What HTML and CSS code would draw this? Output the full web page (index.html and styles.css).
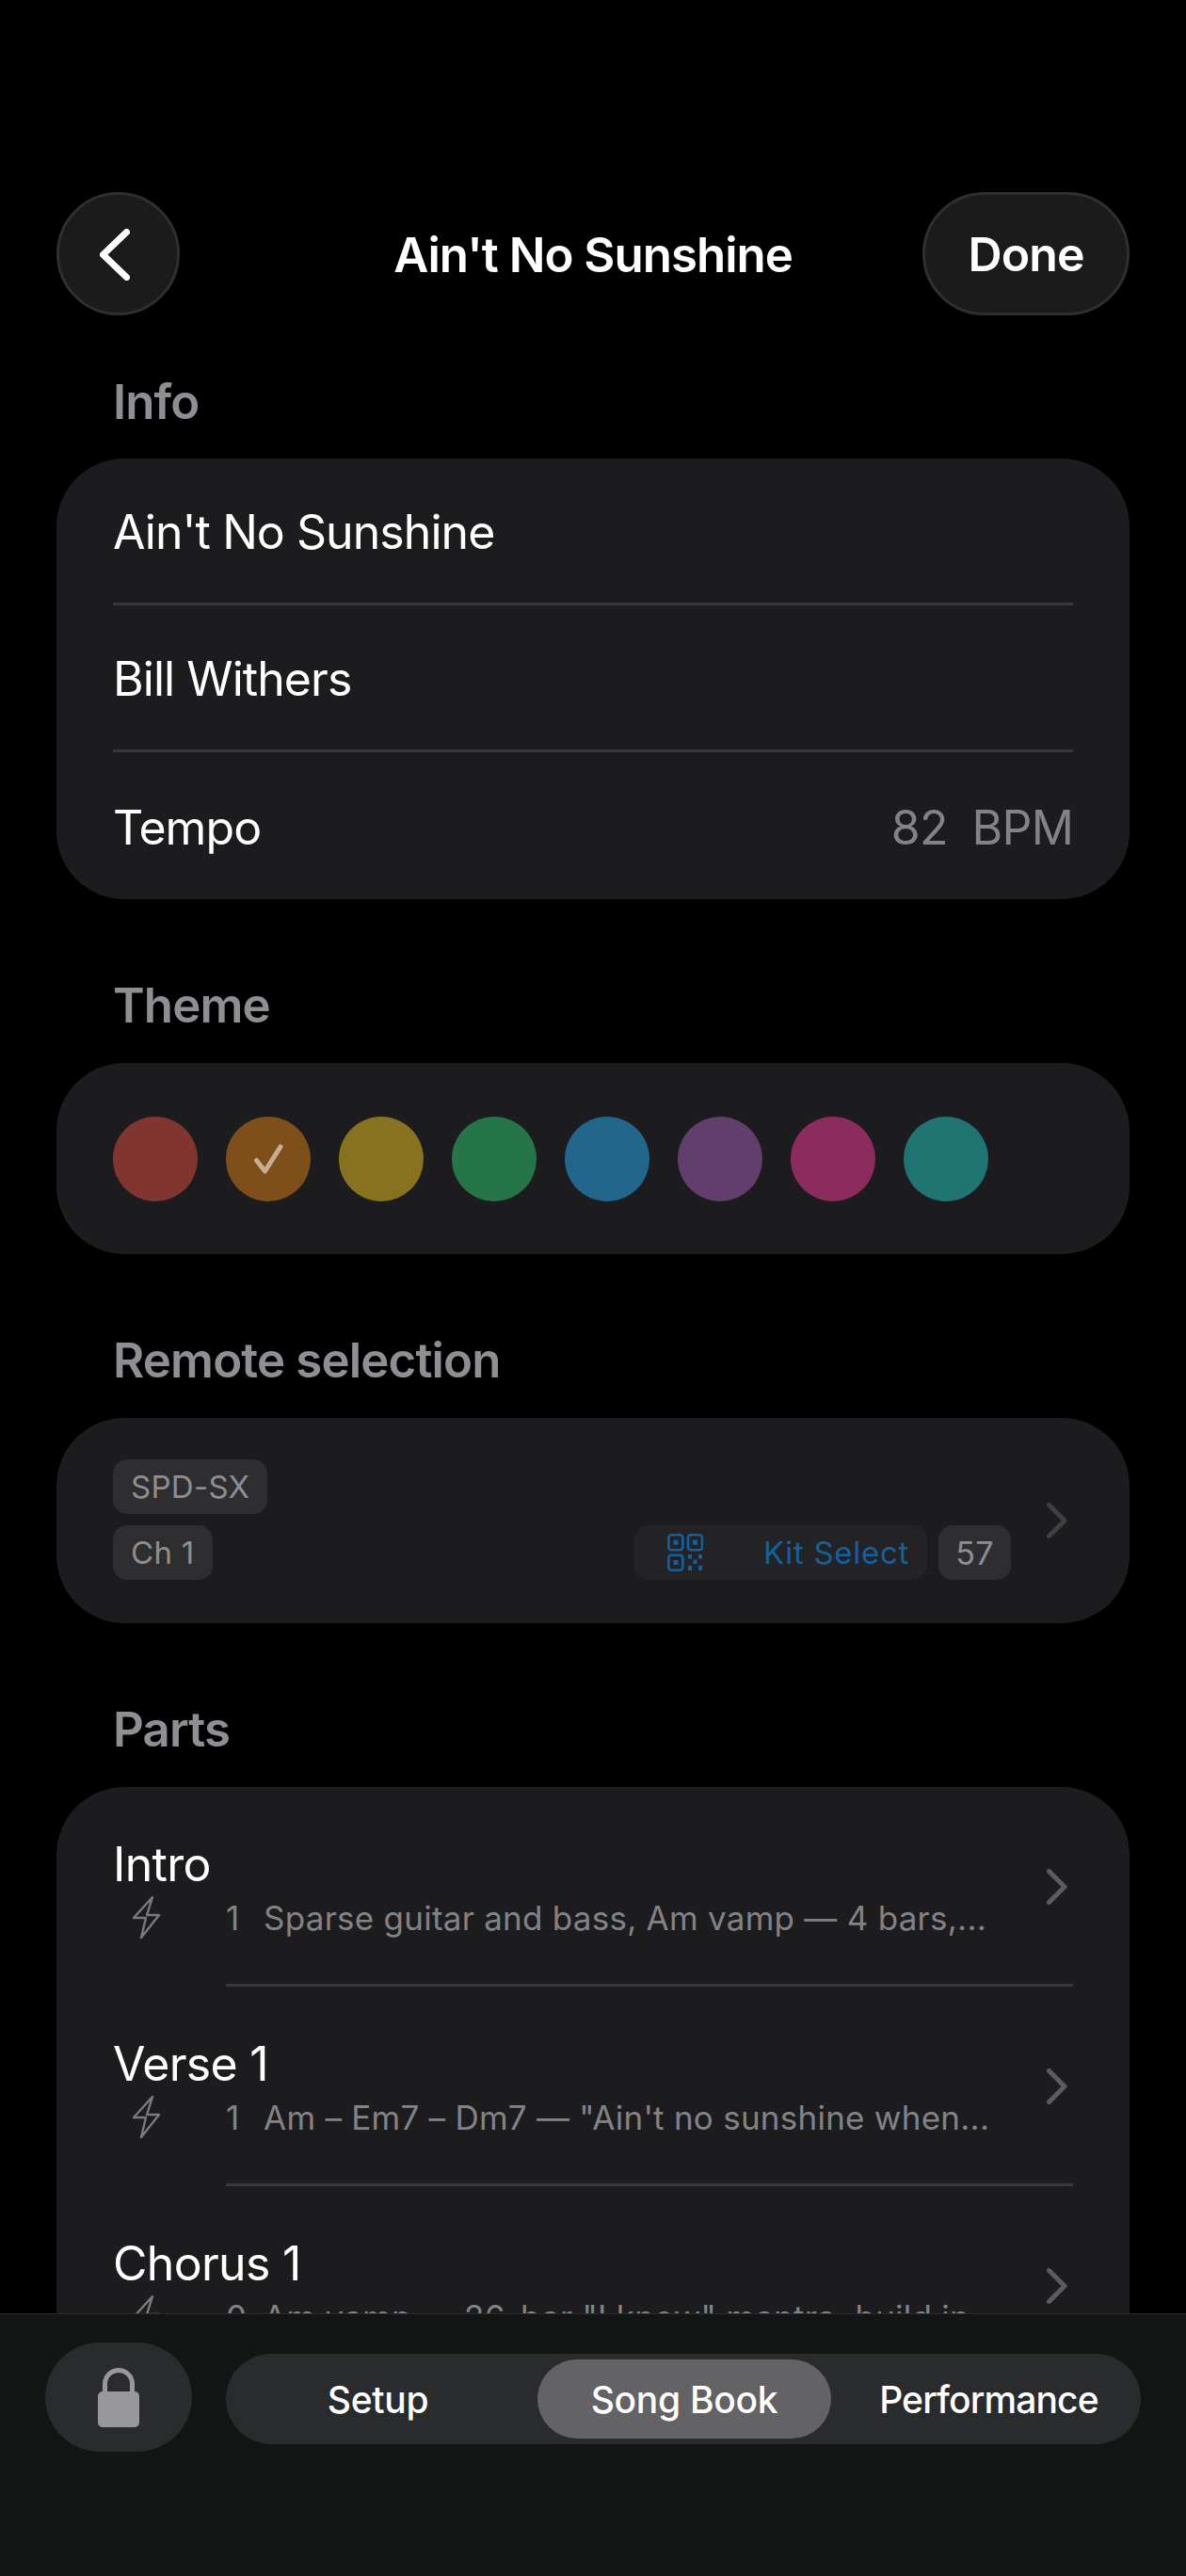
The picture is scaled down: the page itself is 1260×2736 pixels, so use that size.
FILE: index.html
```html
<!DOCTYPE html>
<html lang="en">
<head>
<meta charset="utf-8">
<title>Ain't No Sunshine</title>
<link rel="stylesheet" href="styles.css">
</head>
<body>
<div class="screen">
  <main class="scroll">
    <header class="nav">
      <button class="nav-btn back" aria-label="Back">
        <svg width="32" height="55" viewBox="0 0 32 55"><path d="M28.500 3.500 L3.500 27.500 L28.500 51.500" fill="none" stroke="#fff" stroke-width="7" stroke-linecap="round" stroke-linejoin="round"/></svg>
      </button>
      <h1 class="nav-title">Ain't No Sunshine</h1>
      <button class="nav-btn done">Done</button>
    </header>

    <h2 class="section">Info</h2>
    <section class="card info">
      <div class="info-row">Ain't No Sunshine</div>
      <div class="info-row">Bill Withers</div>
      <div class="info-row"><span>Tempo</span><span class="tempo"><span>82</span><span>BPM</span></span></div>
    </section>

    <h2 class="section">Theme</h2>
    <section class="card swatches">
      <span class="swatch c-red"></span>
      <span class="swatch c-orange">
        <svg width="36" height="36" viewBox="0 0 36 36"><path d="M5.500 19.500 L14.500 31 L31 5" fill="none" stroke="#c6ae95" stroke-width="5" stroke-linecap="round" stroke-linejoin="round"/></svg>
      </span>
      <span class="swatch c-yellow"></span>
      <span class="swatch c-green"></span>
      <span class="swatch c-blue"></span>
      <span class="swatch c-purple"></span>
      <span class="swatch c-pink"></span>
      <span class="swatch c-teal"></span>
    </section>

    <h2 class="section">Remote selection</h2>
    <section class="card remote">
      <div class="remote-body">
        <div class="chip-line"><span class="chip">SPD-SX</span></div>
        <div class="chip-line between">
          <span class="chip">Ch 1</span>
          <span class="kit-group">
            <span class="kit">
              <svg class="qr" width="38" height="40" viewBox="0 0 38 40"><g fill="none" stroke="#14609c" stroke-width="2.6"><rect x="1.3" y="1.3" width="15" height="16" rx="3"/><rect x="22" y="1.3" width="15" height="16" rx="3"/><rect x="1.3" y="22.7" width="15" height="16" rx="3"/></g><g fill="#14609c"><rect x="6.5" y="6.7" width="5" height="5"/><rect x="27" y="6.7" width="5" height="5"/><rect x="6.5" y="28" width="5" height="5"/><rect x="22" y="22" width="4" height="4.5"/><rect x="33" y="22" width="4" height="4.5"/><rect x="27.5" y="27.5" width="4" height="4.5"/><rect x="22" y="34" width="4" height="5"/><rect x="33" y="34" width="4" height="5"/></g></svg>
              <span class="kit-label">Kit Select</span>
            </span>
            <span class="chip num">57</span>
          </span>
        </div>
      </div>
      <svg class="chev dim" width="22" height="38" viewBox="0 0 22 38"><path d="M2.500 2.500 L19 19 L2.500 35.500" fill="none" stroke="#3f3f41" stroke-width="5" stroke-linecap="round" stroke-linejoin="round"/></svg>
    </section>

    <h2 class="section">Parts</h2>
    <section class="card parts">
      <article class="part">
        <div class="part-main">
          <div class="part-title">Intro</div>
          <div class="part-sub">
            <svg class="bolt" width="32" height="48" viewBox="0 0 32 48"><path d="M22 2 L2 24 H15 L10 45 L29 21 H16 Z" fill="none" stroke="#7a7a7c" stroke-width="2.400" stroke-linejoin="round"/></svg>
            <span class="part-num">1</span>
            <span class="part-desc">Sparse guitar and bass, Am vamp — 4 bars,...</span>
          </div>
        </div>
        <svg class="chev" width="22" height="38" viewBox="0 0 22 38"><path d="M2.500 2.500 L19 19 L2.500 35.500" fill="none" stroke="#5c5c5e" stroke-width="5" stroke-linecap="round" stroke-linejoin="round"/></svg>
      </article>
      <article class="part">
        <div class="part-main">
          <div class="part-title">Verse 1</div>
          <div class="part-sub">
            <svg class="bolt" width="32" height="48" viewBox="0 0 32 48"><path d="M22 2 L2 24 H15 L10 45 L29 21 H16 Z" fill="none" stroke="#7a7a7c" stroke-width="2.400" stroke-linejoin="round"/></svg>
            <span class="part-num">1</span>
            <span class="part-desc">Am – Em7 – Dm7 — "Ain't no sunshine when...</span>
          </div>
        </div>
        <svg class="chev" width="22" height="38" viewBox="0 0 22 38"><path d="M2.500 2.500 L19 19 L2.500 35.500" fill="none" stroke="#5c5c5e" stroke-width="5" stroke-linecap="round" stroke-linejoin="round"/></svg>
      </article>
      <article class="part">
        <div class="part-main">
          <div class="part-title">Chorus 1</div>
          <div class="part-sub">
            <svg class="bolt" width="32" height="48" viewBox="0 0 32 48"><path d="M22 2 L2 24 H15 L10 45 L29 21 H16 Z" fill="none" stroke="#7a7a7c" stroke-width="2.400" stroke-linejoin="round"/></svg>
            <span class="part-num">0</span>
            <span class="part-desc">Am vamp — 26-bar "I know" mantra, build in...</span>
          </div>
        </div>
        <svg class="chev" width="22" height="38" viewBox="0 0 22 38"><path d="M2.500 2.500 L19 19 L2.500 35.500" fill="none" stroke="#5c5c5e" stroke-width="5" stroke-linecap="round" stroke-linejoin="round"/></svg>
      </article>
    </section>
  </main>

  <footer class="tabbar">
    <button class="lock" aria-label="Locked">
      <svg width="44" height="63" viewBox="0 0 44 63"><path d="M7.500 30 V17 a14.500 14.500 0 0 1 29 0 V30" fill="none" stroke="#98989b" stroke-width="5"/><rect x="0" y="25" width="44" height="38" rx="5" fill="#98989b"/></svg>
    </button>
    <nav class="tabs">
      <span class="tab">Setup</span>
      <span class="tab active">Song Book</span>
      <span class="tab">Performance</span>
    </nav>
  </footer>
</div>
</body>
</html>
```

FILE: styles.css
```css
* { box-sizing: border-box; margin: 0; padding: 0; }
html, body { background: #000; }
body {
  width: 1260px;
  height: 2736px;
  overflow: hidden;
  font-family: Inter, "Liberation Sans", sans-serif;
  color: #fff;
}
button { font: inherit; color: inherit; border: 0; background: none; }

.screen { height: 2736px; display: flex; flex-direction: column; }
.scroll { flex: 1; min-height: 0; overflow: hidden; padding: 204px 60px 0; }

.nav { display: grid; grid-template-columns: 1fr auto 1fr; align-items: center; height: 131px; }
.nav-btn {
  height: 131px;
  border-radius: 66px;
  background: #1b1b1c;
  border: 3px solid #2f2f30;
  display: flex;
  align-items: center;
  justify-content: center;
}
.back { width: 131px; padding: 2px 7px 0 0; }
.done { width: 220px; font-size: 50px; font-weight: 600; letter-spacing: -0.9px; justify-self: end; }
.nav-title { padding-top: 1px; font-size: 51px; font-weight: 600; letter-spacing: -1px; line-height: 1; }

.section {
  font-size: 51px;
  font-weight: 600;
  line-height: 60px;
  color: #8e8e93;
  letter-spacing: -0.85px;
  padding-left: 60px;
  margin-top: 83px;
  margin-bottom: 31px;
}
.nav + .section { margin-top: 62px; margin-bottom: 30px; }

.card { background: #1c1c1e; border-radius: 72px; }

.info-row {
  height: 156px;
  margin: 0 60px;
  padding-top: 3px;
  display: flex;
  align-items: center;
  justify-content: space-between;
  font-size: 50px;
  letter-spacing: -0.95px;
  border-bottom: 3px solid #38383a;
}
.info-row:last-child { border-bottom: 0; }
.tempo { display: flex; gap: 26px; color: #838386; letter-spacing: -0.8px; }

.swatches { height: 203px; padding: 0 60px; display: flex; align-items: center; gap: 30px; }
.swatch { width: 90px; height: 90px; border-radius: 50%; display: flex; align-items: center; justify-content: center; }
.c-red { background: #803530; }
.c-orange { background: #7f4f19; }
.c-yellow { background: #87721f; }
.c-green { background: #267548; }
.c-blue { background: #22678b; }
.c-purple { background: #613e6b; }
.c-pink { background: #8b2b5e; }
.c-teal { background: #207472; }

.remote { height: 218px; padding: 44px 66px 0 60px; display: flex; align-items: flex-start; }
.remote-body { flex: 1; display: flex; flex-direction: column; gap: 12px; }
.chip-line { display: flex; }
.between { justify-content: space-between; }
.chip {
  height: 58px;
  padding: 0 19px;
  border-radius: 15px;
  background: #2e2e30;
  color: #8e8e91;
  font-size: 33px;
  letter-spacing: 0.3px;
  display: flex;
  align-items: center;
}
.kit-group { display: flex; gap: 12px; margin-right: 38px; }
.kit {
  width: 311px;
  height: 58px;
  padding: 0 19px 0 35px;
  border-radius: 15px;
  background: #232325;
  color: #14609c;
  font-size: 33px;
  letter-spacing: 0.7px;
  display: flex;
  align-items: center;
  justify-content: space-between;
}
.num { width: 77px; padding: 0; justify-content: center; font-size: 34px; }
.chev { flex: none; }
.chev.dim { margin-top: 46px; }

.part { height: 212px; padding: 0 66px 0 60px; display: flex; align-items: center; position: relative; }
.part-main { flex: 1; min-width: 0; padding-top: 4px; }
.part-title { font-size: 50px; letter-spacing: -0.7px; line-height: 60px; margin-bottom: 2px; }
.part-sub { display: flex; align-items: center; color: #838386; font-size: 35px; letter-spacing: 0.25px; height: 50px; white-space: nowrap; }
.bolt { flex: none; margin-left: 20px; margin-right: 68px; }
.part-num { width: 40px; }
.part + .part::before {
  content: "";
  position: absolute;
  left: 180px;
  right: 60px;
  top: -3px;
  height: 3px;
  background: #38383a;
}

.tabbar {
  flex: none;
  height: 279px;
  background: #131515;
  border-top: 1px solid #2c2c2e;
  padding: 30px 48px 0;
  display: flex;
  align-items: flex-start;
  gap: 36px;
}
.lock { width: 156px; height: 116px; border-radius: 58px; background: #2a2b2d; display: flex; align-items: center; justify-content: center; flex: none; }
.tabs {
  width: 972px;
  height: 96px;
  margin-top: 12px;
  padding: 6px;
  border-radius: 48px;
  background: #2a2b2d;
  display: flex;
  align-items: center;
}
.tab { flex: 1; height: 84px; border-radius: 42px; display: flex; align-items: center; justify-content: center; font-size: 39px; font-weight: 500; letter-spacing: -0.3px; }
.tab:first-child { padding-right: 14px; }
.tab:last-child { padding-left: 12px; letter-spacing: -0.85px; }
.tab.active { background: #636366; flex: none; width: 312px; }
```
